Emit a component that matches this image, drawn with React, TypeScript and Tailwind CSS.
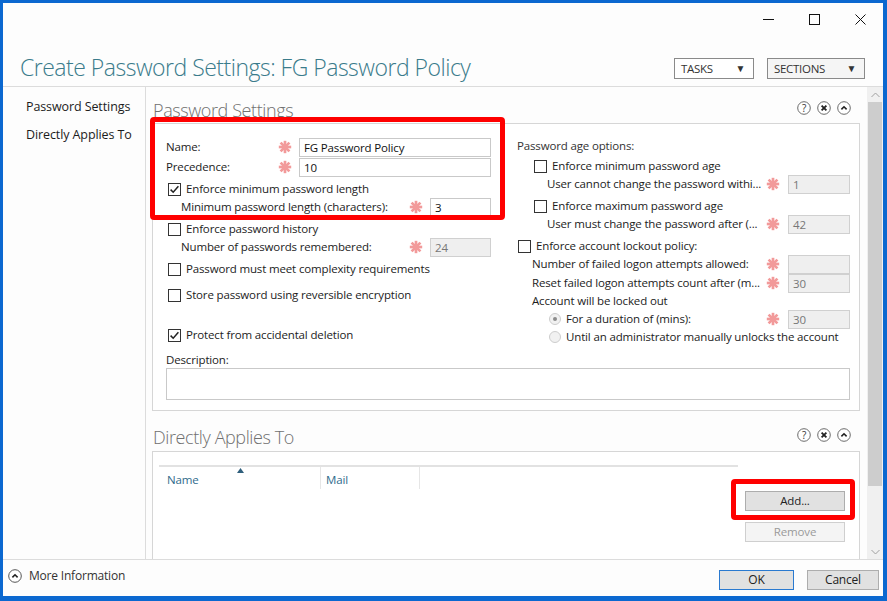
import clsx from 'clsx';

// Create Password Settings dialog (ADAC style)

function Star() {
  return (
    <svg width="14" height="14" viewBox="0 0 14 14" className="shrink-0">
      <g stroke="#f29a9a" strokeWidth="2.7">
        <line x1="7" y1="0.8" x2="7" y2="13.2" />
        <line x1="0.8" y1="7" x2="13.2" y2="7" />
        <line x1="2.6" y1="2.6" x2="11.4" y2="11.4" />
        <line x1="11.4" y1="2.6" x2="2.6" y2="11.4" />
      </g>
    </svg>
  );
}

function Check({ on }: { on?: boolean }) {
  return (
    <span className="w-[13px] h-[13px] border border-[#333] bg-white flex items-center justify-center shrink-0">
      {on && (
        <svg width="11" height="11" viewBox="0 0 11 11">
          <path d="M1.6 5.6 L4.2 8.2 L9.4 2.2" fill="none" stroke="#222" strokeWidth="1.5" />
        </svg>
      )}
    </span>
  );
}

function Radio({ on }: { on?: boolean }) {
  return (
    <span className="w-[12px] h-[12px] rounded-full border border-[#cdcdcd] bg-[#f1f1f1] flex items-center justify-center shrink-0">
      {on && <span className="w-[4px] h-[4px] rounded-full bg-[#8c8c8c]" />}
    </span>
  );
}

function Field({ value, w, disabled }: { value?: string; w: string; disabled?: boolean }) {
  return (
    <div
      className={clsx(
        'h-[19px] border px-[4px] leading-[17px] shrink-0',
        w,
        disabled ? 'bg-[#efefef] border-[#d0d0d0] text-[#777]' : 'bg-white border-[#c9c9c9] text-[#111]'
      )}
    >
      {value}
    </div>
  );
}

function CheckRow({ label, on, className }: { label: string; on?: boolean; className?: string }) {
  return (
    <div className={clsx('h-[18px] flex items-center', className)}>
      <Check on={on} />
      <span className="ml-[5px]">{label}</span>
    </div>
  );
}

function HeadIcons() {
  return (
    <div className="flex gap-[6px]">
      <svg width="14" height="14" viewBox="0 0 14 14">
        <circle cx="7" cy="7" r="6.3" fill="white" stroke="#6b6b6b" />
        <text x="7" y="10.6" textAnchor="middle" fontSize="10" fontFamily="Open Sans, sans-serif" fill="#333">?</text>
      </svg>
      <svg width="14" height="14" viewBox="0 0 14 14">
        <circle cx="7" cy="7" r="6.3" fill="white" stroke="#6b6b6b" />
        <path d="M4.6 4.6 L9.4 9.4 M9.4 4.6 L4.6 9.4" stroke="#222" strokeWidth="1.8" />
      </svg>
      <svg width="14" height="14" viewBox="0 0 14 14">
        <circle cx="7" cy="7" r="6.3" fill="white" stroke="#6b6b6b" />
        <path d="M4.4 8.4 L7 5.8 L9.6 8.4" fill="none" stroke="#222" strokeWidth="1.6" />
      </svg>
    </div>
  );
}

export default function App() {
  return (
    <div className="w-[887px] h-[601px] bg-[#0b68d0] pt-[3px] pl-[3px] pr-[4px] pb-[5px] font-['Open_Sans',sans-serif] text-[#1c1c1c]">
      <div className="relative w-full h-full bg-[#fdfdfd] flex flex-col">
        {/* window controls */}
        <div className="h-[32px] flex justify-end">
          <div className="w-[46px] flex items-center justify-center">
            <svg width="11" height="11" viewBox="0 0 11 11">
              <line x1="0" y1="5.5" x2="11" y2="5.5" stroke="#111" />
            </svg>
          </div>
          <div className="w-[46px] flex items-center justify-center">
            <svg width="11" height="11" viewBox="0 0 11 11">
              <rect x="0.5" y="0.5" width="10" height="10" fill="none" stroke="#111" />
            </svg>
          </div>
          <div className="w-[46px] flex items-center justify-center">
            <svg width="11" height="11" viewBox="0 0 11 11">
              <path d="M0.5 0.5 L10.5 10.5 M10.5 0.5 L0.5 10.5" stroke="#111" />
            </svg>
          </div>
        </div>

        {/* header */}
        <div className="h-[52px] flex items-start border-b border-[#dcdcdc] pl-[17px] pr-[18px]">
          <h1 className="mt-[16px] text-[23px] leading-[33px] font-light text-[#3a7b8b] tracking-[-0.5px]">
            Create Password Settings: FG Password Policy
          </h1>
          <div className="ml-auto mt-[23px] flex gap-[13px] text-[11.5px] tracking-[-0.3px]">
            <button className="w-[80px] h-[21px] border border-[#8a8a8a] bg-white flex items-center pl-[6px] pr-[8px] text-[#333]">
              TASKS<span className="ml-auto text-[10px]">▼</span>
            </button>
            <button className="w-[98px] h-[21px] border border-[#8a8a8a] bg-[#f5f5f5] flex items-center pl-[6px] pr-[8px] text-[#333]">
              SECTIONS<span className="ml-auto text-[10px]">▼</span>
            </button>
          </div>
        </div>

        {/* body */}
        <div className="flex h-[472px]">
          <nav className="w-[143px] shrink-0 border-r border-[#dcdcdc] pl-[23px] pt-[6px] text-[12.5px] tracking-[-0.1px]">
            <div className="h-[28px] flex items-center">Password Settings</div>
            <div className="h-[28px] flex items-center">Directly Applies To</div>
          </nav>

          <main className="flex-1 pl-[6px] pr-[7px] overflow-hidden relative text-[11.5px] tracking-[-0.15px]">
            {/* Password Settings section */}
            <div className="h-[36px] flex items-start pr-[9px]">
              <h2 className="mt-[10px] ml-[1px] text-[18px] leading-[26px] font-light text-[#707070] tracking-[-0.4px]">Password Settings</h2>
              <div className="ml-auto mt-[14px]">
                <HeadIcons />
              </div>
            </div>
            <div className="h-[288px] border border-[#d6d6d6] bg-white pt-[13px] pl-[13px] pr-[8px]">
              <div className="flex">
                {/* left column */}
                <div className="w-[325px] flex flex-col">
                  <div className="h-[20px] flex items-center">
                    <span className="w-[112px]">Name:</span>
                    <Star />
                    <span className="w-[7px]" />
                    <Field value="FG Password Policy" w="w-[192px]" />
                  </div>
                  <div className="h-[20px] flex items-center">
                    <span className="w-[112px]">Precedence:</span>
                    <Star />
                    <span className="w-[7px]" />
                    <Field value="10" w="w-[192px]" />
                  </div>
                  <CheckRow className="mt-[3px] pl-[2px]" on label="Enforce minimum password length" />
                  <div className="h-[18px] flex items-center pl-[15px]">
                    <span className="w-[228px]">Minimum password length (characters):</span>
                    <Star />
                    <span className="w-[7px]" />
                    <Field value="3" w="w-[61px]" />
                  </div>
                  <CheckRow className="mt-[4px] pl-[2px]" label="Enforce password history" />
                  <div className="h-[18px] flex items-center pl-[15px]">
                    <span className="w-[228px]">Number of passwords remembered:</span>
                    <Star />
                    <span className="w-[7px]" />
                    <Field value="24" w="w-[61px]" disabled />
                  </div>
                  <CheckRow className="mt-[4px] pl-[2px]" label="Password must meet complexity requirements" />
                  <CheckRow className="mt-[8px] pl-[2px]" label="Store password using reversible encryption" />
                  <CheckRow className="mt-[22px] pl-[2px]" on label="Protect from accidental deletion" />
                </div>

                {/* right column */}
                <div className="ml-[26px] w-[333px] flex flex-col">
                  <div className="h-[18px] flex items-center text-[#333]">Password age options:</div>
                  <CheckRow className="mt-[2px] pl-[17px]" label="Enforce minimum password age" />
                  <div className="h-[18px] flex items-center pl-[30px]">
                    <span className="w-[219px] whitespace-nowrap">User cannot change the password withi...</span>
                    <Star />
                    <span className="w-[8px]" />
                    <Field value="1" w="w-[62px]" disabled />
                  </div>
                  <CheckRow className="mt-[4px] pl-[17px]" label="Enforce maximum password age" />
                  <div className="h-[18px] flex items-center pl-[30px]">
                    <span className="w-[219px] whitespace-nowrap">User must change the password after (...</span>
                    <Star />
                    <span className="w-[8px]" />
                    <Field value="42" w="w-[62px]" disabled />
                  </div>
                  <CheckRow className="mt-[4px] pl-[1px]" label="Enforce account lockout policy:" />
                  <div className="h-[18px] flex items-center pl-[15px]">
                    <span className="w-[234px] whitespace-nowrap">Number of failed logon attempts allowed:</span>
                    <Star />
                    <span className="w-[8px]" />
                    <Field w="w-[62px]" disabled />
                  </div>
                  <div className="mt-[1px] h-[18px] flex items-center pl-[15px]">
                    <span className="w-[234px] whitespace-nowrap">Reset failed logon attempts count after (m...</span>
                    <Star />
                    <span className="w-[8px]" />
                    <Field value="30" w="w-[62px]" disabled />
                  </div>
                  <div className="h-[18px] flex items-center pl-[15px]">Account will be locked out</div>
                  <div className="h-[18px] flex items-center pl-[32px]">
                    <Radio on />
                    <span className="ml-[5px] w-[200px]">For a duration of (mins):</span>
                    <Star />
                    <span className="w-[8px]" />
                    <Field value="30" w="w-[62px]" disabled />
                  </div>
                  <div className="h-[18px] flex items-center pl-[32px]">
                    <Radio />
                    <span className="ml-[5px] whitespace-nowrap">Until an administrator manually unlocks the account</span>
                  </div>
                </div>
              </div>
              <div className="mt-[6px] h-[16px] flex items-center">Description:</div>
              <div className="w-[684px] h-[32px] border border-[#c9c9c9] bg-white" />
            </div>

            {/* Directly Applies To section */}
            <div className="h-[40px] flex items-start pr-[9px]">
              <h2 className="mt-[13px] ml-[1px] text-[18px] leading-[26px] font-light text-[#707070] tracking-[-0.4px]">Directly Applies To</h2>
              <div className="ml-auto mt-[17px]">
                <HeadIcons />
              </div>
            </div>
            <div className="h-[130px] border border-[#d6d6d6] bg-white pt-[13px] pl-[6px] pr-[13px] flex">
              <div className="w-[579px] flex flex-col">
                <div className="h-[2px] bg-[#e2e2e2]" />
                <div className="h-[22px] flex text-[#2f6b8c]">
                  <div className="relative w-[162px] border-r border-[#e6e6e6] pl-[8px] pt-[4px] flex items-center">
                    Name
                    <svg width="7" height="5" viewBox="0 0 7 5" className="absolute left-[78px] top-[1px]">
                      <path d="M0 5 L3.5 0 L7 5 Z" fill="#2f5f7c" />
                    </svg>
                  </div>
                  <div className="w-[99px] border-r border-[#e6e6e6] pl-[5px] pt-[4px] flex items-center">Mail</div>
                </div>
              </div>
              <div className="ml-[7px] w-[100px] pt-[26px] flex flex-col">
                <button className="h-[20px] border border-[#adadad] bg-[#e1e1e1] text-[#222]">Add...</button>
                <button className="mt-[11px] h-[20px] border border-[#cfcfcf] bg-[#f4f4f4] text-[#9a9a9a]">Remove</button>
              </div>
            </div>

            {/* annotation highlights */}
            <div className="absolute left-[4px] top-[30px] w-[355px] h-[103px] border-[5px] border-[#ff0000] rounded-[4px]" />
            <div className="absolute left-[585px] top-[392px] w-[124px] h-[41px] border-[5px] border-[#ff0000] rounded-[4px]" />
          </main>

          {/* scrollbar */}
          <div className="w-[16px] shrink-0 bg-[#f0f0f0] flex flex-col items-center">
            <div className="h-[15px] flex items-center justify-center">
              <svg width="9" height="6" viewBox="0 0 9 6">
                <path d="M0.5 5 L4.5 1 L8.5 5" fill="none" stroke="#a0a0a0" />
              </svg>
            </div>
            <div className="w-[14px] h-[384px] bg-[#cdcdcd]" />
            <div className="flex-1" />
            <div className="h-[15px] flex items-center justify-center">
              <svg width="9" height="6" viewBox="0 0 9 6">
                <path d="M0.5 1 L4.5 5 L8.5 1" fill="none" stroke="#a0a0a0" />
              </svg>
            </div>
          </div>
        </div>

        {/* footer */}
        <div className="flex-1 border-t border-[#dcdcdc] flex items-start pl-[5px] pr-[4px] text-[12px] tracking-[-0.2px]">
          <div className="mt-[8px] h-[16px] flex items-center">
            <svg width="14" height="14" viewBox="0 0 14 14">
              <circle cx="7" cy="7" r="6.3" fill="white" stroke="#555" />
              <path d="M4.4 8.4 L7 5.8 L9.6 8.4" fill="none" stroke="#222" strokeWidth="1.6" />
            </svg>
            <span className="ml-[7px] text-[#333]">More Information</span>
          </div>
          <div className="ml-auto mt-[10px] flex gap-[13px]">
            <button className="w-[75px] h-[20px] border border-[#2a7ad0] bg-[#e1e1e1] text-[#222]">OK</button>
            <button className="w-[72px] h-[20px] border border-[#adadad] bg-[#e1e1e1] text-[#222]">Cancel</button>
          </div>
        </div>
      </div>
    </div>
  );
}
